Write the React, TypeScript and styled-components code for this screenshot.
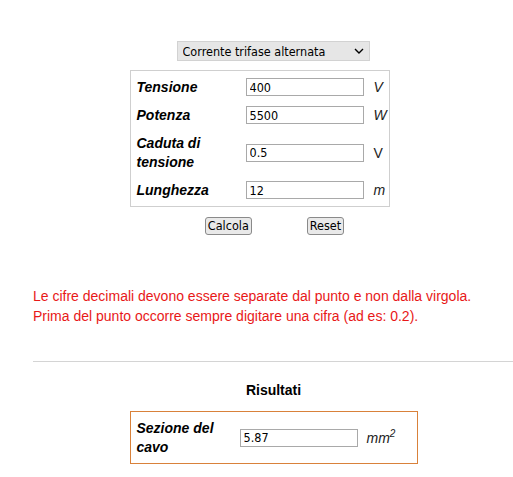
import React, { useState } from "react";
import styled, { createGlobalStyle } from "styled-components";

const GlobalStyle = createGlobalStyle`
  body {
    margin: 0;
    background: #ffffff;
    font-family: "Liberation Sans", Arial, sans-serif;
  }
`;

const Page = styled.div`
  padding: 41px 0 0 33px;
  color: #000;
`;

const Center = styled.div`
  display: flex;
  flex-direction: column;
  align-items: center;
`;

const SelectWrap = styled.div`
  position: relative;
  width: 193px;
  height: 20px;
`;

const Select = styled.select`
  appearance: none;
  width: 100%;
  height: 20px;
  margin: 0;
  padding: 0 0 0 5px;
  border: 1px solid #d2d2d2;
  background: #e6e6e6;
  font-family: "DejaVu Sans Condensed", "DejaVu Sans", sans-serif;
  font-size: 12.5px;
  color: #000;
  outline: none;
`;

const Chevron = styled.svg`
  position: absolute;
  right: 6px;
  top: 7px;
  pointer-events: none;
`;

const Block = styled.div`
  width: 288px;
  margin-top: 9px;
  margin-left: 1px;
`;

const Box = styled.div<{ $accent?: boolean; $width: number }>`
  box-sizing: border-box;
  width: ${(p) => p.$width}px;
  border: 1px solid ${(p) => (p.$accent ? "#d9813a" : "#cfcfcf")};
  padding: 2px 0 2px 6px;
  display: grid;
  grid-template-columns: ${(p) => (p.$accent ? "103px 127px auto" : "109px 128px auto")};
`;

const Row = styled.div`
  display: contents;
`;

const Label = styled.div`
  font-weight: bold;
  font-style: italic;
  font-size: 14px;
  line-height: 19px;
  padding: 5px 0 4px;
  display: flex;
  align-items: center;
`;

const Cell = styled.div`
  display: flex;
  align-items: center;
`;

const Input = styled.input`
  box-sizing: border-box;
  width: 118px;
  height: 18px;
  margin: 0;
  padding: 0 3px;
  border: 1px solid #a9a9a9;
  font-family: "DejaVu Sans Condensed", "DejaVu Sans", sans-serif;
  font-size: 12.5px;
  color: #000;
  background: #fff;
  outline: none;
`;

const Unit = styled.span<{ $italic?: boolean }>`
  font-size: 14px;
  font-style: ${(p) => (p.$italic ? "italic" : "normal")};
  color: #222;
`;

const Buttons = styled.div`
  display: flex;
  gap: 55px;
  margin-top: 10px;
  margin-left: 3px;
`;

const Button = styled.button`
  height: 18px;
  padding: 0 2px;
  border: 1px solid #8a8a8a;
  border-radius: 3px;
  background: #e9e9e9;
  font-family: "DejaVu Sans Condensed", "DejaVu Sans", sans-serif;
  font-size: 12.5px;
  color: #000;
  line-height: 16px;
`;

const Notice = styled.p`
  margin: 51px 0 0;
  color: #e81818;
  font-size: 14px;
  line-height: 20px;
`;

const Rule = styled.hr`
  margin: 35px 0 0;
  border: none;
  border-top: 1px solid #d4d4d4;
  height: 0;
`;

const Heading = styled.div`
  margin-top: 18px;
  font-weight: bold;
  font-size: 14px;
  line-height: 20px;
  text-align: center;
  padding-left: 1px;
`;

const ResultBlock = styled.div`
  width: 288px;
  margin-top: 11px;
  margin-left: 1px;
`;

const Sup = styled.sup`
  font-size: 10px;
  line-height: 0;
`;

const fields = [
  { label: "Tensione", value: "400", unit: "V", italic: true },
  { label: "Potenza", value: "5500", unit: "W", italic: true },
  { label: "Caduta di tensione", value: "0.5", unit: "V", italic: false },
  { label: "Lunghezza", value: "12", unit: "m", italic: true },
];

export default function App() {
  const [values, setValues] = useState(fields.map((f) => f.value));

  return (
    <>
      <GlobalStyle />
      <Page>
        <Center>
          <SelectWrap>
            <Select defaultValue="trifase">
              <option value="trifase">Corrente trifase alternata</option>
              <option value="mono">Corrente monofase alternata</option>
              <option value="continua">Corrente continua</option>
            </Select>
            <Chevron width="10" height="6" viewBox="0 0 10 6">
              <path d="M1 1 L5 5 L9 1" fill="none" stroke="#000" strokeWidth="1.4" />
            </Chevron>
          </SelectWrap>
          <Block>
            <Box $width={260}>
              {fields.map((f, i) => (
                <Row key={f.label}>
                  <Label>{f.label}</Label>
                  <Cell>
                    <Input
                      value={values[i]}
                      onChange={(e) => {
                        const next = [...values];
                        next[i] = e.target.value;
                        setValues(next);
                      }}
                    />
                  </Cell>
                  <Cell>
                    <Unit $italic={f.italic}>{f.unit}</Unit>
                  </Cell>
                </Row>
              ))}
            </Box>
          </Block>
          <Buttons>
            <Button>Calcola</Button>
            <Button onClick={() => setValues(fields.map(() => ""))}>Reset</Button>
          </Buttons>
        </Center>
        <Notice>
          Le cifre decimali devono essere separate dal punto e non dalla virgola.
          <br />
          Prima del punto occorre sempre digitare una cifra (ad es: 0.2).
        </Notice>
        <Rule />
        <Heading>Risultati</Heading>
        <Center>
          <ResultBlock>
            <Box $accent $width={288}>
              <Row>
                <Label>Sezione del cavo</Label>
                <Cell>
                  <Input readOnly value="5.87" />
                </Cell>
                <Cell>
                  <Unit $italic>
                    mm<Sup>2</Sup>
                  </Unit>
                </Cell>
              </Row>
            </Box>
          </ResultBlock>
        </Center>
      </Page>
    </>
  );
}
